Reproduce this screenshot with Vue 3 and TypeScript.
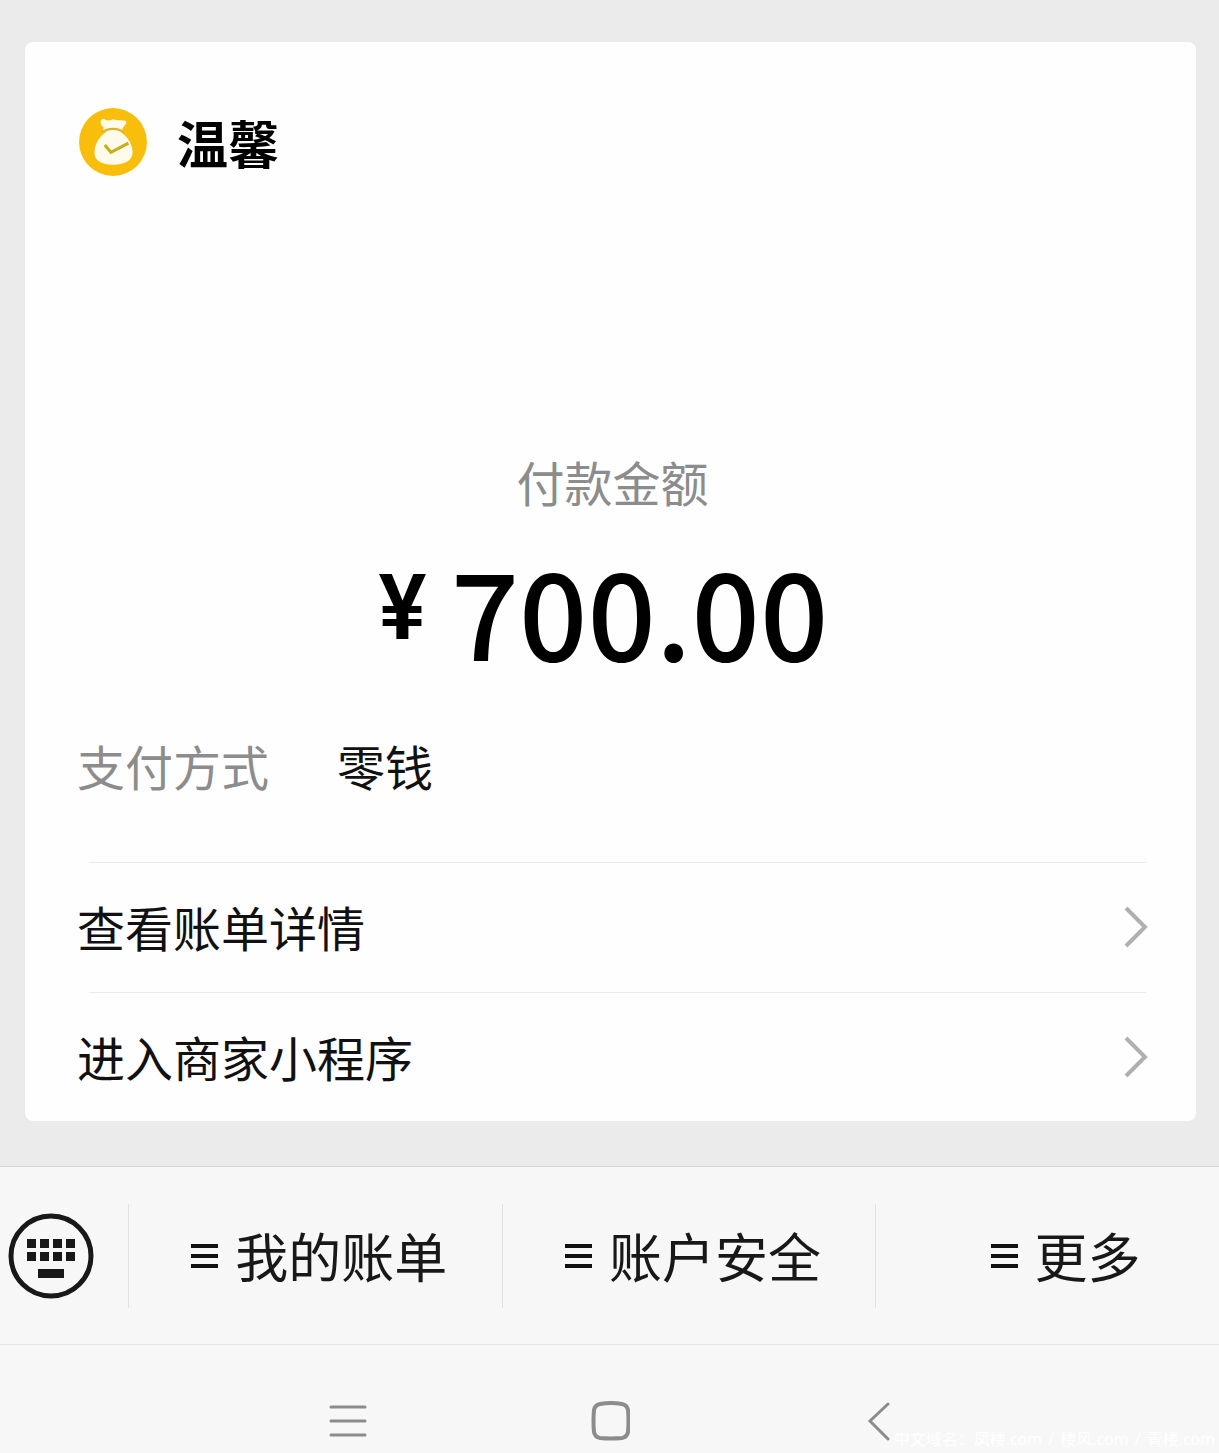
<script setup lang="ts">
interface LinkRow {
  label: string
  href: string
}

const links: LinkRow[] = [
  { label: '查看账单详情', href: '#bill' },
  { label: '进入商家小程序', href: '#merchant' },
]

const tabs: string[] = ['我的账单', '账户安全', '更多']
</script>

<template>
  <div class="screen">
    <main class="chat">
      <article class="card">
        <header class="merchant">
          <svg class="logo" viewBox="0 0 70 70" aria-hidden="true">
            <circle cx="35" cy="35" r="33" fill="#f9bd0b" />
            <path
              d="M23 15c0-2 2-3 4-2 3 2 5 1 8 0 3 1 6 1 10 1 3 0 4 2 2 4l-3 4 1 3H25l1-4-2-2c-1-1-1-3-1-4z"
              fill="#fffbea"
            />
            <path
              d="M35 23c-8 0-18 11-18 22 0 8 6 12 18 12s19-4 19-12c0-11-10-22-19-22z"
              fill="#fffbea"
            />
            <path d="M24 26c6-5 16-5 22 0" fill="none" stroke="#d8b52c" stroke-width="2" />
            <path d="M27 38l6 7 17-9" fill="none" stroke="#c9ad1c" stroke-width="3" />
          </svg>
          <h1 class="name">温馨</h1>
        </header>

        <section class="payment">
          <p class="caption">付款金额</p>
          <p class="amount"><span class="currency">¥</span><span class="value">700.00</span></p>
        </section>

        <dl class="method">
          <dt>支付方式</dt>
          <dd>零钱</dd>
        </dl>

        <nav class="links">
          <a v-for="row in links" :key="row.href" class="link" :href="row.href">
            <span class="label">{{ row.label }}</span>
            <svg class="chevron" viewBox="0 0 24 42" aria-hidden="true">
              <path d="M2 2l19 19L2 40" fill="none" stroke="#b0b0b0" stroke-width="4" />
            </svg>
          </a>
        </nav>
      </article>
    </main>

    <footer class="menu">
      <button class="keyboard" type="button" aria-label="键盘">
        <svg viewBox="0 0 86 86" aria-hidden="true">
          <circle cx="43" cy="43" r="40" fill="none" stroke="#181818" stroke-width="5" />
          <path
            d="M19 26h9v9h-9zM32 26h9v9h-9zM45 26h9v9h-9zM58 26h9v9h-9zM19 39h9v9h-9zM32 39h9v9h-9zM45 39h9v9h-9zM58 39h9v9h-9zM30 56h26v9H30z"
            fill="#181818"
          />
        </svg>
      </button>
      <button v-for="tab in tabs" :key="tab" class="tab" type="button">
        <svg class="bars" viewBox="0 0 28 26" aria-hidden="true">
          <path d="M0 3h27M0 13h27M0 23h27" stroke="#111" stroke-width="4" />
        </svg>
        <span class="label">{{ tab }}</span>
      </button>
    </footer>

    <div class="system">
      <button class="key" type="button" aria-label="最近任务">
        <svg viewBox="0 0 40 40" aria-hidden="true">
          <path d="M4 6h34M4 20h34M4 34h34" stroke="#8c8c8c" stroke-width="3" stroke-linecap="round" />
        </svg>
      </button>
      <button class="key" type="button" aria-label="主屏幕">
        <svg viewBox="0 0 40 40" aria-hidden="true">
          <path
            d="M10 3Q21 1 32 3Q37 4 38 9Q39 20 38 31Q37 36 32 37Q21 38 10 37Q5 36 4 31Q3 20 4 9Q5 4 10 3z"
            fill="none"
            stroke="#8c8c8c"
            stroke-width="4"
          />
        </svg>
      </button>
      <button class="key" type="button" aria-label="返回">
        <svg viewBox="0 0 40 40" aria-hidden="true">
          <path d="M35 3L17 20l18 18" fill="none" stroke="#8c8c8c" stroke-width="3" stroke-linecap="round" />
        </svg>
      </button>
      <span class="watermark">中文域名：凤楼.com<i> / </i>楼风.com<i> / </i>青楼.com</span>
    </div>
  </div>
</template>

<style>
body {
  margin: 0;
  background: #f7f7f7;
}
</style>

<style scoped>
.screen {
  min-height: 100vh;
  display: flex;
  flex-direction: column;
  background: #f7f7f7;
  color: #111;
  font-family: "Noto Sans CJK SC", sans-serif;
}

button {
  margin: 0;
  padding: 0;
  border: 0;
  background: none;
  color: inherit;
  font: inherit;
}

svg {
  display: block;
}

.chat {
  padding: 42px 23px 45px 25px;
  background: #ebebeb;
}

.card {
  padding: 64px 48px 0 52px;
  border-radius: 8px;
  background: #fefefe;
}

.merchant {
  display: flex;
  align-items: center;
  gap: 28px;
}

.logo {
  width: 72px;
  height: 72px;
}

.name {
  margin: 0;
  font-size: 51px;
  font-weight: 700;
  line-height: 64px;
  color: #000;
}

.payment {
  padding-top: 271px;
  text-align: center;
}

.caption {
  margin: 0;
  font-size: 48px;
  line-height: 64px;
  color: #8c8c8c;
}

.amount {
  display: flex;
  justify-content: center;
  align-items: flex-start;
  gap: 24px;
  margin: 28px 18px 0 0;
  color: #000;
}

.currency {
  padding-top: 24px;
  font-family: Roboto, sans-serif;
  font-size: 90px;
  font-weight: 600;
  line-height: 88px;
}

.value {
  font-size: 120px;
  font-weight: 500;
  line-height: 136px;
}

.method {
  display: flex;
  gap: 68px;
  margin: 56px 0 64px;
  font-size: 48px;
  line-height: 64px;
}

.method dt {
  color: #8c8c8c;
}

.method dd {
  margin: 0;
}

.link {
  display: flex;
  align-items: center;
  justify-content: space-between;
  height: 129px;
  border-top: 1px solid transparent;
  background: linear-gradient(#ebebeb, #ebebeb) 12px 0 / calc(100% - 14px) 1px no-repeat;
  color: inherit;
  font-size: 48px;
  text-decoration: none;
}

.label {
  padding-bottom: 2px;
}

.chevron {
  width: 24px;
  height: 42px;
}

.menu {
  display: flex;
  align-items: center;
  height: 177px;
  border-top: 1px solid #d6d6d6;
  border-bottom: 1px solid #e6e6e6;
}

.keyboard {
  flex: 0 0 128px;
}

.keyboard svg {
  width: 86px;
  height: 86px;
  margin-left: 8px;
}

.tab {
  display: flex;
  flex: 366 1 0;
  align-items: center;
  justify-content: center;
  gap: 16px;
  height: 104px;
  padding-left: 8px;
  border-left: 1px solid #e2e2e2;
  color: #181818;
  font-size: 53px;
  line-height: 64px;
}

.tab:last-child {
  flex-grow: 308;
  padding-left: 36px;
}

.bars {
  width: 28px;
  height: 26px;
}

.system {
  position: relative;
  display: flex;
  flex: 1;
  align-items: center;
  justify-content: center;
  gap: 223px;
  min-height: 107px;
}

.key svg {
  width: 40px;
  height: 40px;
}

.key {
  margin-top: 44px;
}

.watermark {
  position: absolute;
  right: 4px;
  bottom: 2px;
  color: #fff;
  font-family: "Open Sans", "Noto Sans CJK SC", sans-serif;
  font-size: 16px;
  line-height: 24px;
  white-space: nowrap;
}

.watermark i {
  padding: 0 2px;
  font-style: normal;
}
</style>
